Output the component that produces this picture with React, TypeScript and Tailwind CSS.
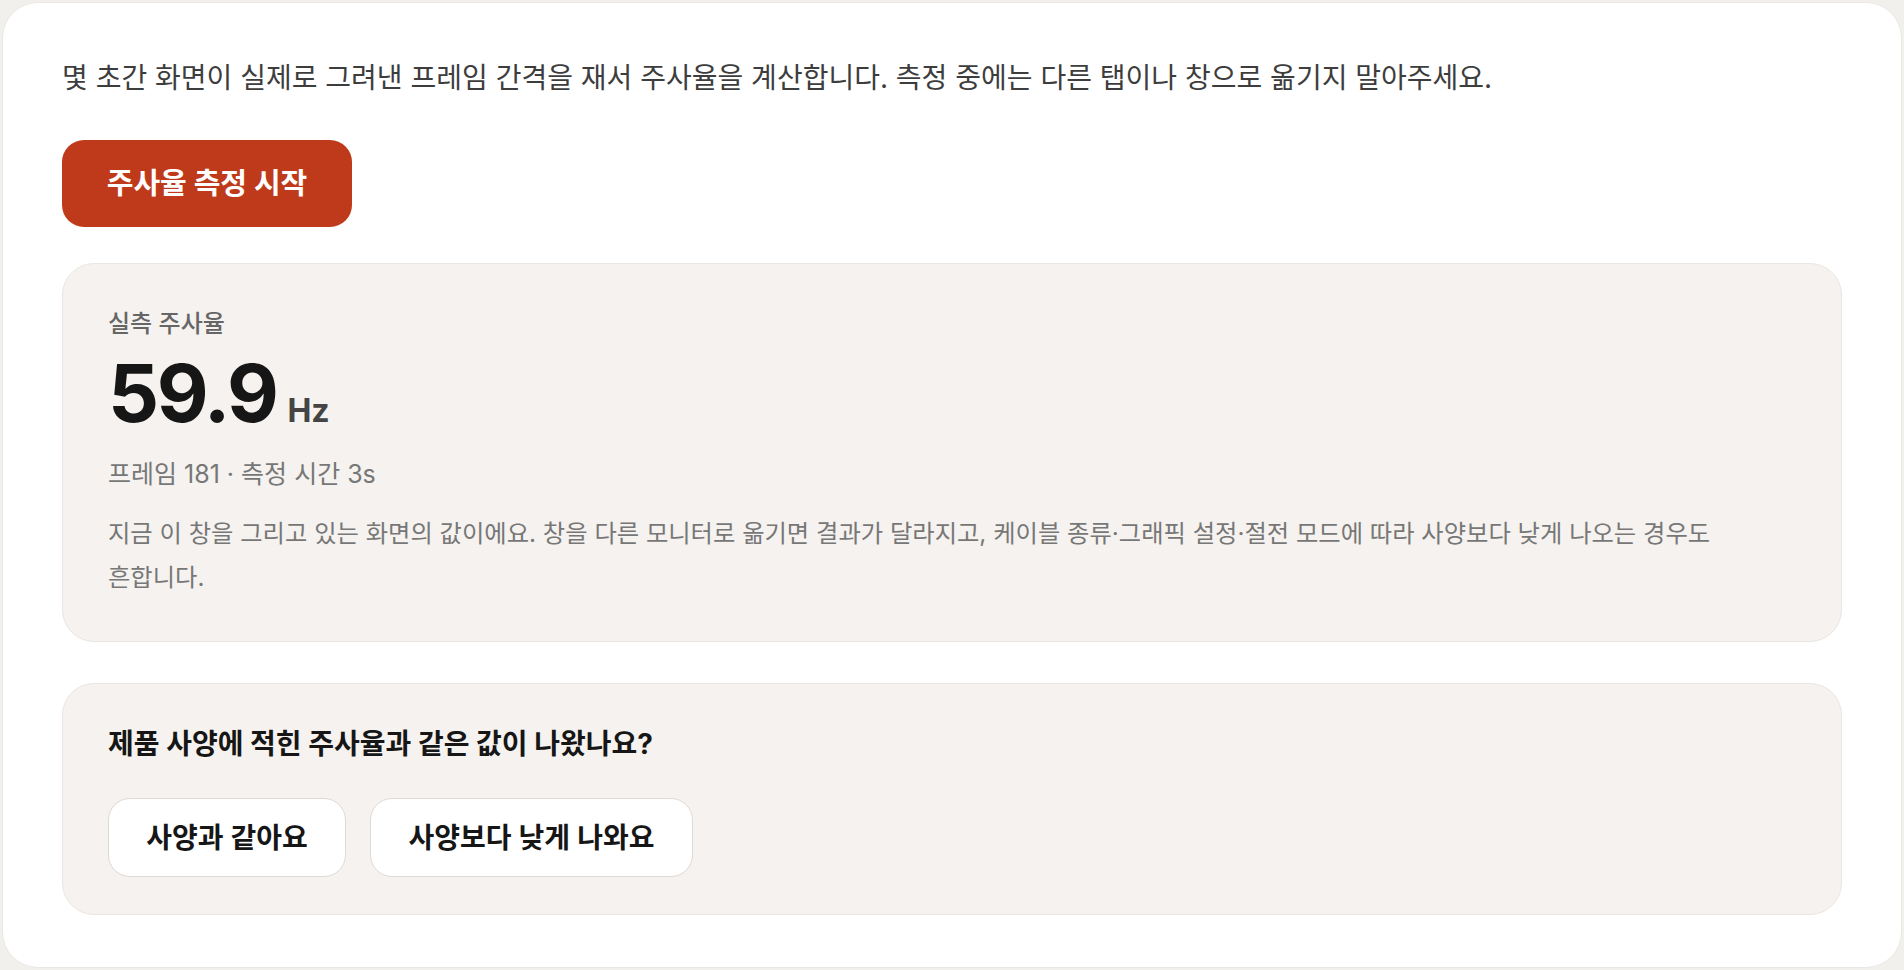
import React from "react";

const font = {
  fontFamily: '"Inter", "Noto Sans CJK KR", sans-serif',
};

export default function App() {
  return (
    <div
      className="min-h-screen bg-[#f2f0ed] p-[2px] text-[#1a1a1a]"
      style={font}
    >
      <div className="flex min-h-[966px] flex-col rounded-[36px] border border-[#ebe8e4] bg-white px-[59px] pt-[55px] pb-[50px]">
        {/* intro */}
        <p className="text-[28px] leading-[40px] text-[#3d3d3d]">
          몇 초간 화면이 실제로 그려낸 프레임 간격을 재서 주사율을 계산합니다.
          측정 중에는 다른 탭이나 창으로 옮기지 말아주세요.
        </p>
        <div className="mt-[42px]">
          <button className="h-[87px] w-[290px] rounded-[22px] bg-[#bf3a1a] text-[29px] font-bold text-white">
            주사율 측정 시작
          </button>
        </div>

        {/* result */}
        <div className="mt-[36px] rounded-[32px] border border-[#ebe6e1] bg-[#f5f2ef] px-[45px] pt-[44px] pb-[42px]">
          <div className="text-[24px] font-medium leading-[32px] text-[#666]">
            실측 주사율
          </div>
          <div className="mt-[7px] flex items-baseline gap-[11px]">
            <span className="text-[80px] font-bold leading-[92px] tracking-[-2.5px] text-[#161616]">
              59.9
            </span>
            <span className="text-[32px] font-bold leading-[40px] text-[#444]">
              Hz
            </span>
          </div>
          <div className="mt-[18px] text-[25px] leading-[34px] text-[#777]">
            프레임 181 · 측정 시간 3s
          </div>
          <p className="mt-[20px] max-w-[1620px] break-keep text-[24.3px] leading-[44px] text-[#777]">
            지금 이 창을 그리고 있는 화면의 값이에요. 창을 다른 모니터로 옮기면
            결과가 달라지고, 케이블 종류·그래픽 설정·절전 모드에 따라 사양보다
            낮게 나오는 경우도 흔합니다.
          </p>
        </div>

        {/* feedback */}
        <div className="mt-[41px] rounded-[32px] border border-[#ebe6e1] bg-[#f5f2ef] px-[45px] pt-[42px] pb-[37px]">
          <div className="text-[28px] font-bold leading-[36px] text-[#161616]">
            제품 사양에 적힌 주사율과 같은 값이 나왔나요?
          </div>
          <div className="mt-[36px] flex gap-[24px]">
            <button className="h-[79px] w-[238px] rounded-[22px] border border-[#dedad6] bg-white text-[28px] font-semibold text-[#161616]">
              사양과 같아요
            </button>
            <button className="h-[79px] w-[323px] rounded-[22px] border border-[#dedad6] bg-white text-[28px] font-semibold text-[#161616]">
              사양보다 낮게 나와요
            </button>
          </div>
        </div>
      </div>
    </div>
  );
}
